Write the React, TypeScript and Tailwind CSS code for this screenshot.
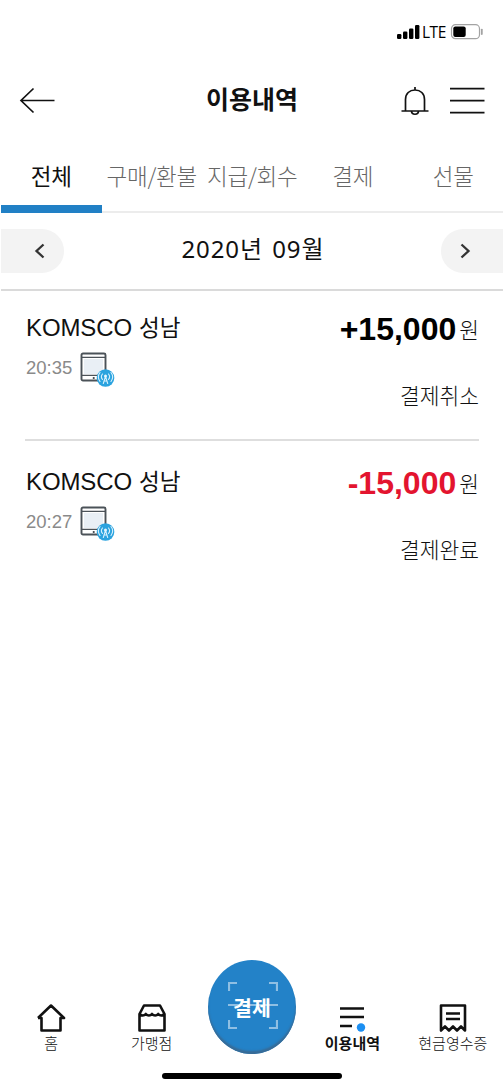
import type { ReactNode } from 'react';

const tabs = [
  { label: '전체', active: true },
  { label: '구매/환불' },
  { label: '지급/회수' },
  { label: '결제' },
  { label: '선물' },
];

const transactions = [
  { id: 1, store: 'KOMSCO', area: '성남', time: '20:35', amount: '+15,000', status: '결제취소', color: 'text-black' },
  { id: 2, store: 'KOMSCO', area: '성남', time: '20:27', amount: '-15,000', status: '결제완료', color: 'text-[#e3142f]' },
];

const StatusBar = () => (
  <div className="h-[62px] flex justify-end items-start pt-[22px] pr-[20px]">
    <svg width="24" height="20" viewBox="0 0 24 20" fill="#000">
      <rect x="0" y="12" width="4.4" height="5" rx="1.2" />
      <rect x="6" y="9.5" width="4.4" height="7.5" rx="1.2" />
      <rect x="12" y="6.5" width="4.4" height="10.5" rx="1.2" />
      <rect x="18" y="3" width="4.4" height="14" rx="1.2" />
    </svg>
    <span className="ml-[1px] w-[25px] font-['Open_Sans','Noto_Sans',sans-serif] text-[15.5px] font-medium leading-5 tracking-[-0.5px] text-black">LTE</span>
    <svg className="ml-[3px]" width="34" height="20" viewBox="0 0 34 20" fill="none">
      <rect x="1.5" y="2.7" width="28" height="14" rx="4" stroke="#a3a3a3" strokeWidth="1.2" />
      <rect x="3.3" y="4.5" width="12.4" height="10.6" rx="2" fill="#000" />
      <path d="M31.8 7.6v4.4" stroke="#a3a3a3" strokeWidth="1.8" strokeLinecap="round" />
    </svg>
  </div>
);

const Header = () => (
  <header className="h-[78px] grid grid-cols-[1fr_auto_1fr] items-center px-[19px]">
    <svg width="37" height="28" viewBox="0 0 37 28" fill="none" stroke="#111" strokeWidth="1.7">
      <path d="M35.5 13.5H2M14.5 1.5L2 13.5l12.5 12" />
    </svg>
    <h1 className="text-[25px] leading-9 font-bold text-[#111] -mt-[6px]">이용내역</h1>
    <div className="flex justify-end items-center">
      <svg className="mr-[20px]" width="30" height="30" viewBox="0 0 30 30" fill="none" stroke="#111" strokeWidth="1.7">
        <path d="M15 1v3M5.5 25V13.5C5.5 7.5 9.5 4 15 4s9.5 3.5 9.500 9.500V25M1.500 25h27M11.500 25c0 4.300 7 4.300 7 0" />
      </svg>
      <svg width="35" height="28" viewBox="0 0 35 28" stroke="#111" strokeWidth="1.8">
        <path d="M0 1.600h34.500M0 13.600h34.500M0 25.600h34.500" />
      </svg>
    </div>
  </header>
);

const DeviceIcon = () => (
  <svg className="ml-[8px] mt-[1px]" width="36" height="36" viewBox="0 0 36 36" fill="none">
    <rect x="1.500" y="1.500" width="24" height="27" rx="1.500" fill="#fff" stroke="#4b5258" strokeWidth="1.900" />
    <path d="M2 5.300h23M2 23.300h23" stroke="#4b5258" strokeWidth="1.300" />
    <rect x="4" y="7" width="19" height="15" fill="#e9eff5" />
    <path d="M12.800 26h1.800" stroke="#4b5258" strokeWidth="2" />
    <circle cx="25.500" cy="26" r="8.800" fill="#2ba3df" />
    <g stroke="#d7f0fc" strokeWidth="1.100" strokeLinecap="round">
      <path d="M25.500 24.500l-2.200 7M25.500 24.500l2.200 7M24.500 29h2" />
      <path d="M22.500 22c-1.400 1.700-1.400 3.800 0 5.500M28.500 22c1.400 1.700 1.400 3.800 0 5.500M20 20.500c-2 2.700-2 6.300 0 9M31 20.500c2 2.700 2 6.300 0 9" />
    </g>
    <circle cx="25.500" cy="24" r="1.500" fill="#e6f6fd" />
  </svg>
);

const NavItem = ({ label, active, children }: { label: string; active?: boolean; children: ReactNode }) => (
  <div className="flex flex-col items-center pt-[44px]">
    <div className="h-[31px]">{children}</div>
    <span className={`text-[15px] leading-5 whitespace-nowrap text-[#111] ${active ? 'font-bold' : 'font-light'}`}>{label}</span>
  </div>
);

const App = () => {
  return (
    <div className="w-[504px] h-[1090px] bg-white flex flex-col overflow-hidden font-['Noto_Sans_CJK_KR',sans-serif]">
      <StatusBar />
      <Header />

      <nav className="h-[73px] mx-px flex border-b-2 border-[#ececec]">
        {tabs.map((tab) => (
          <div
            key={tab.label}
            className={`h-[73px] w-[100.5px] shrink-0 flex justify-center pt-[19px] text-[22.5px] leading-8 tracking-[-0.2px] whitespace-nowrap ${
              tab.active ? 'text-[#111] border-b-8 border-[#2180c5]' : 'text-[#666] font-light'
            }`}
          >
            {tab.label}
          </div>
        ))}
      </nav>

      {/* Month picker */}
      <div className="h-[78px] shrink-0 mx-px flex items-center justify-between border-b-2 border-[#dadada]">
        <button className="w-[63px] h-[44px] rounded-r-full bg-[#f3f3f3] flex items-center pl-[33px]">
          <svg width="12" height="16" viewBox="0 0 12 16" fill="none" stroke="#333" strokeWidth="2.3">
            <path d="M9.5 1.5L2.5 8l7 6.5" />
          </svg>
        </button>
        <span className="text-[24px] leading-8 text-[#111] -mt-[6px]">
          <span className="font-['Noto_Sans',sans-serif] tracking-[0.9px]">2020</span>년
          <span className="font-['Noto_Sans',sans-serif] tracking-[0.9px] ml-[3px]"> 09</span>월
        </span>
        <button className="w-[62px] h-[44px] rounded-l-full bg-[#f3f3f3] flex items-center pl-[18px]">
          <svg width="12" height="16" viewBox="0 0 12 16" fill="none" stroke="#333" strokeWidth="2.3">
            <path d="M2.5 1.5l7 6.5-7 6.5" />
          </svg>
        </button>
      </div>

      <main className="flex-1 pl-[25px] pr-[25px]">
        {transactions.map((tx) => (
          <div key={tx.id} className="h-[150px] mb-[4px] flex justify-between border-b-2 border-[#dedede] last:border-0">
            <div className="pt-[17px] pl-px">
              <div className="h-[36px] flex items-baseline text-[#111]">
                <span className="font-['Liberation_Sans',Arial,sans-serif] text-[24px] leading-9 tracking-[-0.1px]">{tx.store}</span>
                <span className="ml-[7px] text-[22.5px] leading-9">{tx.area}</span>
              </div>
              <div className="flex items-start mt-[7px]">
                <span className="font-['Liberation_Sans',Arial,sans-serif] text-[18.5px] leading-6 text-[#8a8a8a] mt-[5px]">{tx.time}</span>
                <DeviceIcon />
              </div>
            </div>
            <div className="pt-[19px] flex flex-col items-end">
              <div className="h-[38px] flex items-baseline">
                <span className={`font-['Liberation_Sans',Arial,sans-serif] font-bold text-[32px] leading-[38px] ${tx.color}`}>{tx.amount}</span>
                <span className="ml-[3px] pb-[3px] self-end text-[21.5px] leading-8 font-light text-[#111]">원</span>
              </div>
              <span className="mt-[31px] text-[21.5px] leading-8 font-light text-[#111]">{tx.status}</span>
            </div>
          </div>
        ))}
      </main>

      <footer className="h-[132px] shrink-0 flex flex-col items-center">
        <div className="h-[115px] w-full grid grid-cols-5 px-px">
          <NavItem label="홈">
            <svg width="30" height="30" viewBox="0 0 30 30" fill="none" stroke="#111" strokeWidth="2.6" strokeLinejoin="round">
              <path d="M2 16L15 3.5 28 16H24.500v12.500H5.500V16H2" />
            </svg>
          </NavItem>
          <NavItem label="가맹점">
            <svg width="30" height="30" viewBox="0 0 30 30" fill="none" stroke="#111" strokeWidth="2.6" strokeLinejoin="round">
              <path d="M2.500 12v16.500h25V12L23 3.500H7L2.500 12c2 2 4.500 2 6.300 0 1.800 2 4.500 2 6.200 0 1.800 2 4.500 2 6.200 0 1.800 2 4.300 2 6.300 0" />
            </svg>
          </NavItem>
          <div className="flex justify-center">
            <div className="relative w-[88px] h-[94px] shrink-0 mt-[2px] rounded-[50%] bg-[#2382c8] shadow-[inset_0_-3px_2px_#386b96] flex items-center justify-center">
              <svg className="absolute left-[20px] top-[22px]" width="50" height="47" viewBox="0 0 50 47" fill="none" stroke="#8fbfe3" strokeWidth="2.2">
                <path d="M1 9V1h8M41 1h8v8M49 38v8h-8M9 46H1v-8M0 23h50" />
              </svg>
              <span className="relative text-[20.5px] leading-7 font-bold text-white">결제</span>
            </div>
          </div>
          <NavItem label="이용내역" active>
            <svg width="30" height="30" viewBox="0 0 30 30" fill="none" stroke="#111" strokeWidth="2.6">
              <path d="M3 6.500h24M3 15h24M3 24h12" />
              <circle cx="24" cy="25.500" r="4.200" fill="#1b8ff2" stroke="none" />
            </svg>
          </NavItem>
          <NavItem label="현금영수증">
            <svg width="30" height="30" viewBox="0 0 30 30" fill="none" stroke="#111" strokeWidth="2.6" strokeLinejoin="round">
              <path d="M3 3.500h24v25l-4-4-4 4-4-4-4 4-4-4-4 4zM8 11.500h14M8 17h14" />
            </svg>
          </NavItem>
        </div>
        <div className="w-[180px] h-[6px] rounded-full bg-black" />
      </footer>
    </div>
  );
};

export default App;
